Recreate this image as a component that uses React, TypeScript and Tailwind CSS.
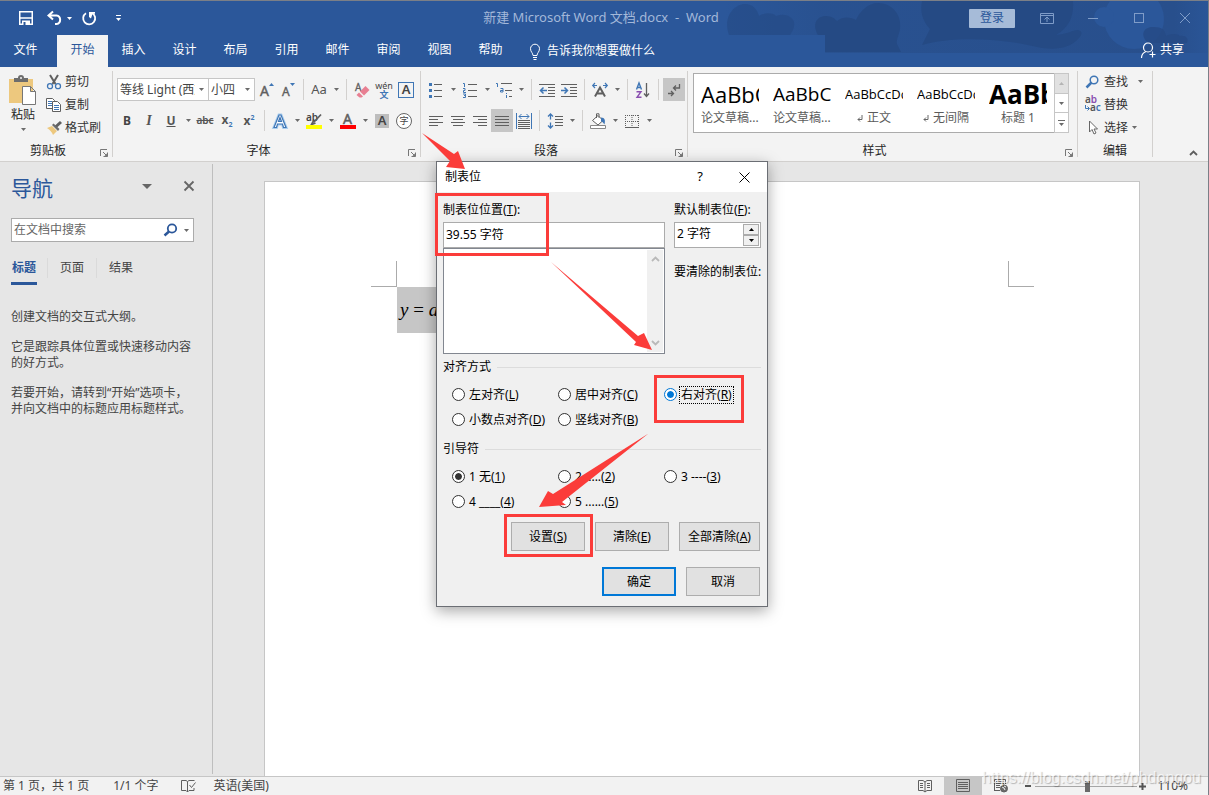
import type { ReactNode } from "react";

const TABS = ["文件", "开始", "插入", "设计", "布局", "引用", "邮件", "审阅", "视图", "帮助"];

const STYLES = [
  { sample: "AaBbC", name: "论文草稿...", size: "text-[22px]", mark: false },
  { sample: "AaBbCc", name: "论文草稿...", size: "text-[19px]", mark: false },
  { sample: "AaBbCcDd", name: "正文", size: "text-[13px]", mark: true },
  { sample: "AaBbCcDd", name: "无间隔", size: "text-[13px]", mark: true },
  { sample: "AaBbC", name: "标题 1", size: "text-[26px] font-bold", mark: false },
];

const ALIGNMENTS = [
  { label: "左对齐", hotkey: "L" },
  { label: "居中对齐", hotkey: "C" },
  { label: "右对齐", hotkey: "R" },
  { label: "小数点对齐", hotkey: "D" },
  { label: "竖线对齐", hotkey: "B" },
];

const LEADERS = [
  { label: "1 无", hotkey: "1" },
  { label: "2 .....", hotkey: "2" },
  { label: "3 ----", hotkey: "3" },
  { label: "4 ____", hotkey: "4" },
  { label: "5 ......", hotkey: "5" },
];

function Svg({ children, className = "w-4 h-4", box = "0 0 16 16" }: { children: ReactNode; className?: string; box?: string }) {
  return (
    <svg viewBox={box} className={`shrink-0 overflow-visible ${className}`} fill="none" stroke="#5f5f5f" aria-hidden="true">
      {children}
    </svg>
  );
}

function Caret({ className = "text-[#6a6a6a]" }: { className?: string }) {
  return (
    <svg viewBox="0 0 5 3" className={`w-[5px] h-[3px] shrink-0 ${className}`} aria-hidden="true">
      <path d="M0 0h5L2.5 3z" fill="currentColor" />
    </svg>
  );
}

function Tool({ label, active, children }: { label: string; active?: boolean; children: ReactNode }) {
  return (
    <button
      type="button"
      aria-label={label}
      className={`flex w-[22px] h-[23px] shrink-0 items-center justify-center ${active ? "bg-[#c6c6c6]" : ""}`}
    >
      {children}
    </button>
  );
}

function More({ label }: { label: string }) {
  return (
    <button type="button" aria-label={label} className="flex w-3 h-[23px] shrink-0 items-center justify-center">
      <Caret />
    </button>
  );
}

function Sep() {
  return <div className="w-px h-[21px] mx-1 shrink-0 bg-[#d2d0ce]" />;
}

function Group({ title, launcher = true, className = "", children }: { title: string; launcher?: boolean; className?: string; children: ReactNode }) {
  return (
    <section className={`flex flex-col h-[86px] border-r border-[#d2d0ce] ${className}`}>
      <div className="flex-1">{children}</div>
      <div className="flex h-3 items-end">
        <span className="flex-1 text-center leading-3">{title}</span>
        {launcher && (
          <button type="button" aria-label={`${title}设置`} className="w-4 flex justify-center">
            <Svg className="w-2 h-2" box="0 0 8 8">
              <path d="M.5 7V.5H7M3 3l4 4M7.5 3.5v4h-4" stroke="#777" />
              <path d="M7.5 4v3.500H4z" fill="#777" stroke="none" />
            </Svg>
          </button>
        )}
      </div>
    </section>
  );
}

function Combo({ label, value, className }: { label: string; value: string; className: string }) {
  return (
    <div className={`flex h-[23px] items-center gap-1 border border-[#c6c6c6] bg-white pl-0.5 pr-1 ${className}`}>
      <select aria-label={label} className="min-w-0 flex-1 appearance-none bg-transparent overflow-hidden text-[#444]">
        <option>{value}</option>
      </select>
      <Caret />
    </div>
  );
}

function TitleBar() {
  return (
    <div className="relative flex h-[34px] items-center text-white">
      <div className="flex w-[294px] shrink-0 items-center pl-[18px]">
        <button type="button" aria-label="保存" className="mr-[13px]">
          <Svg>
            <path d="M1.750 1.750h12.500v12.500H1.750zM1.750 8h12.500" stroke="#fff" strokeWidth="1.500" />
            <path d="M4 10.500h8V15H4z" fill="#fff" stroke="none" />
            <path d="M5.500 12h2v3h-2z" fill="#2b579a" stroke="none" />
          </Svg>
        </button>
        <button type="button" aria-label="撤消" className="mr-1">
          <Svg>
            <path d="M6 1.500L1.500 5.500 6 9.500M2 5.500h7.500a4.300 4.300 0 0 1 0 8.500H8" stroke="#fff" strokeWidth="2" />
          </Svg>
        </button>
        <Caret className="mr-[9px]" />
        <button type="button" aria-label="重复" className="mr-[19px]">
          <Svg>
            <path d="M5 3.200A6 6 0 1 0 11 3" stroke="#fff" strokeWidth="1.800" />
            <path d="M8 2h6v1.800h-2.500L10 8.500 8 7z" fill="#fff" stroke="none" />
          </Svg>
        </button>
        <button type="button" aria-label="自定义快速访问工具栏" className="flex flex-col items-center gap-0.5">
          <span className="h-px w-[5px] bg-white" />
          <Caret className="text-white" />
        </button>
      </div>
      <div className="flex-1 text-center text-[13px] text-[#a3b8d9] whitespace-pre leading-4 pb-0.5">新建 Microsoft Word 文档.docx  -  Word</div>
      <div className="flex w-[300px] shrink-0 items-center justify-end text-[#7f9cc8]">
        <button type="button" className="mr-[9px] h-[19px] w-[46px] rounded-[1px] bg-[#a6bbd8] leading-4 text-[#2b579a]">登录</button>
        <button type="button" aria-label="功能区显示选项" className="flex w-[46px] justify-center">
          <Svg className="w-[14px] h-[14px]" box="1 1 14 14">
            <path d="M1.500 3.500h13v10h-13zM1.500 5.500h13M8 12V7.500M5.500 9.500L8 7l2.500 2.500" stroke="#7f9cc8" />
          </Svg>
        </button>
        <button type="button" aria-label="最小化" className="flex w-[46px] justify-center">
          <span className="h-px w-[10px] bg-[#7f9cc8]" />
        </button>
        <button type="button" aria-label="最大化" className="flex w-[46px] justify-center">
          <span className="h-[10px] w-[10px] border border-[#7f9cc8]" />
        </button>
        <button type="button" aria-label="关闭" className="flex w-[46px] justify-center">
          <Svg className="w-[10px] h-[10px]" box="0 0 10 10">
            <path d="M0 0l10 10M10 0L0 10" stroke="#7f9cc8" />
          </Svg>
        </button>
      </div>
    </div>
  );
}

function Header() {
  return (
    <header className="relative bg-[#2b579a]">
      <svg viewBox="0 0 484 52" className="absolute right-0 top-0 w-[484px] h-[52px]" aria-hidden="true">
        <defs>
          <linearGradient id="fade" x1="0" x2="1">
            <stop offset="0" stopColor="#284f8c" stopOpacity="0" />
            <stop offset=".2" stopColor="#284f8c" stopOpacity=".7" />
            <stop offset=".93" stopColor="#284f8c" />
            <stop offset="1" stopColor="#284f8c" stopOpacity=".2" />
          </linearGradient>
        </defs>
        <path d="M0 0h484v52H101V34H0z" fill="url(#fade)" />
        <circle cx="410" cy="18" r="30" fill="#2b579a" />
        <circle cx="380" cy="16" r="10" fill="#2b579a" />
        <g fill="#254a84">
          <path d="M5 34C-2 14 12 3 21 3c8 0 12 5 14 12 6-4 15-3 17 0 8-3 16 0 18 6 1 6-2 10-4 13z" opacity=".6" />
          <path d="M94 34c-6-10-2-19 8-19 6 0 9 3 11 5 6-5 14-4 19-1 4-9 12-17 22-17 14 0 24 12 22 26-1 6-4 11-3 15l4 8h-76V34z" />
          <path d="M198 0h151c1 14-3 26-17 34 12-1 17-5 21-5 5 0 6 4 2 8-10 12-28 12-42 9-40-10-88-10-115-2l8-16c-8-9-10-18-8-28z" />
          <path d="M424 42c-10-10-2-17 6-16 8 0 11 3 12 9 6-3 12-2 14 0 6-1 9 3 7 7z" opacity=".8" />
        </g>
      </svg>
      <TitleBar />
      <nav className="relative flex h-8 items-stretch text-white">
        {TABS.map((tab, i) => (
          <button
            key={tab}
            type="button"
            className={`w-[51px] pb-0.5 ${i === 0 ? "mr-[6px]" : ""} ${tab === "开始" ? "bg-[#f3f3f3] text-[#2b579a]" : ""}`}
          >
            {tab}
          </button>
        ))}
        <button type="button" className="ml-3 flex items-center gap-[5px]">
          <Svg className="w-[14px] h-[17px]" box="0 0 14 17">
            <path d="M5 12.500C5 10 2.500 9 2.500 5.700a4.500 4.500 0 0 1 9 0C11.500 9 9 10 9 12.500zM5 14.500h4M5.500 16.500h3" stroke="#fff" />
          </Svg>
          告诉我你想要做什么
        </button>
        <button type="button" className="ml-auto mr-6 flex items-center gap-1 pb-0.5">
          <Svg>
            <circle cx="8" cy="5.500" r="4.500" stroke="#fff" strokeWidth="1.200" />
            <path d="M1.500 16c0-3.500 2-5.500 4.500-6.500M9.500 12.500h6M12.500 9.500v6" stroke="#fff" strokeWidth="1.200" />
          </Svg>
          共享
        </button>
      </nav>
    </header>
  );
}

function ClipboardGroup() {
  return (
    <Group title="剪贴板" className="w-[113px]">
      <div className="flex">
        <button type="button" className="flex w-[46px] flex-col items-center pt-[3px]">
          <Svg className="w-[30px] h-8" box="0 0 30 32">
            <path d="M1 5h24v24H1z" fill="#edc87e" stroke="none" />
            <path d="M6 4h4a3 3 0 0 1 6 0h4v4H6z" fill="#6d6d6d" stroke="none" />
            <circle cx="13" cy="4" r="1" fill="#f3f3f3" stroke="none" />
            <path d="M14.500 12.500h8l5 5v13h-13zM22.500 12.500v5h5" fill="#fff" stroke="#777" />
          </Svg>
          <span className="leading-[18px]">粘贴</span>
          <span className="pt-1 leading-none"><Caret /></span>
        </button>
        <div className="flex flex-col text-[#333]">
          <button type="button" className="flex h-[23px] items-center gap-[3px] pb-0.5">
            <Svg>
              <path d="M4 1l5.500 9M12 1l-5.500 9" strokeWidth="2" />
              <circle cx="4" cy="12.200" r="2.500" stroke="#3f76b5" strokeWidth="1.300" />
              <circle cx="12" cy="12.200" r="2.500" stroke="#3f76b5" strokeWidth="1.300" />
            </Svg>
            剪切
          </button>
          <button type="button" className="flex h-[23px] items-center gap-[3px] pb-0.5">
            <Svg>
              <path d="M.5 1.500h6l2 2v8h-8z" fill="#fff" />
              <path d="M2 4.500h4M2 6.500h4M2 8.500h4" stroke="#3f76b5" />
              <path d="M6.500 4.500h5l3 3v7h-8z" fill="#fff" />
              <path d="M8 8.500h5M8 10.500h5M8 12.500h5" stroke="#3f76b5" />
            </Svg>
            复制
          </button>
          <button type="button" className="flex h-[23px] items-center gap-[3px] pb-0.5">
            <Svg>
              <path d="M1 8l5-2 5 5-4 4c-1-3-3-5-6-7z" fill="#edc87e" stroke="none" />
              <path d="M6 5l6 6 1.500-2-6-5.500z" fill="#6d6d6d" stroke="none" />
              <path d="M10 6.500L15 2" strokeWidth="3" />
            </Svg>
            格式刷
          </button>
        </div>
      </div>
    </Group>
  );
}

function FontGroup() {
  return (
    <Group title="字体" className="w-[308px]">
      <div className="flex flex-col gap-2 pt-[7px] pl-[3px] text-[#555]">
        <div className="flex items-center">
          <Combo label="字体" value="等线 Light (西文标题)" className="ml-px w-[92px] -mr-px" />
          <Combo label="字号" value="小四" className="w-[47px]" />
          <Tool label="增大字号">
            <Svg>
              <text x="2" y="14" fontSize="14" fill="#5f5f5f" stroke="#5f5f5f" strokeWidth=".4">A</text>
              <path d="M11 4l2.500-3L16 4z" fill="#3f76b5" stroke="none" />
            </Svg>
          </Tool>
          <Tool label="减小字号">
            <Svg>
              <text x="2" y="14" fontSize="12" fill="#5f5f5f" stroke="#5f5f5f" strokeWidth=".4">A</text>
              <path d="M10 1l2.500 3L15 1z" fill="#3f76b5" stroke="none" />
            </Svg>
          </Tool>
          <Sep />
          <Tool label="更改大小写"><span className="text-[13px]">Aa</span></Tool>
          <More label="大小写选项" />
          <Sep />
          <Tool label="清除所有格式">
            <Svg>
              <text x="1" y="9" fontSize="10" fill="#5f5f5f" stroke="#5f5f5f" strokeWidth=".3">A</text>
              <path d="M6 9.500L11.500 4l4 4L10 13.500z" fill="#e87f92" stroke="none" />
              <path d="M5 10.500l4 4-1.500 1h-2L2.500 13z" fill="#e87f92" stroke="none" />
            </Svg>
          </Tool>
          <Tool label="拼音指南">
            <span className="flex flex-col items-center">
              <span className="text-[9px] leading-[9px] text-[#444]">wén</span>
              <span className="text-[9px] leading-[9px] font-bold text-[#3f76b5]">文</span>
            </span>
          </Tool>
          <Tool label="字符边框">
            <span className="flex h-4 w-4 items-center justify-center border border-[#3f76b5] text-[13px] font-semibold leading-none text-[#444]">A</span>
          </Tool>
        </div>
        <div className="flex items-center">
          <Tool label="加粗"><b className="text-[#444]">B</b></Tool>
          <Tool label="倾斜"><i className="font-['Liberation_Serif',serif] text-sm font-bold">I</i></Tool>
          <Tool label="下划线"><b className="underline">U</b></Tool>
          <More label="下划线选项" />
          <Tool label="删除线"><span className="text-[10px] font-semibold line-through">abc</span></Tool>
          <Tool label="下标"><b>x<span className="align-sub text-[7px] text-[#3f76b5]">2</span></b></Tool>
          <Tool label="上标"><b>x<span className="align-super text-[7px] text-[#3f76b5]">2</span></b></Tool>
          <Sep />
          <Tool label="文本效果">
            <Svg>
              <path d="M2 14.500L7 2h2l5 12.500h-2.500L10.500 11h-5l-1 3.500zM6.500 8.500h3L8 4.500z" fill="#fff" stroke="#a9cdee" strokeWidth="3" />
              <path d="M2 14.500L7 2h2l5 12.500h-2.500L10.500 11h-5l-1 3.500zM6.500 8.500h3L8 4.500z" fill="#fff" stroke="#3f76b5" strokeWidth="1.200" />
            </Svg>
          </Tool>
          <More label="文本效果选项" />
          <Tool label="突出显示">
            <Svg>
              <text x="0" y="8" fontSize="10" fill="#444" stroke="none" fontWeight="600">ab</text>
              <path d="M15 1.500L8 9M7.500 8l-2 3.500 4-1.500" strokeWidth="1.800" />
              <path d="M0 12h16v4H0z" fill="#ff0" stroke="none" />
            </Svg>
          </Tool>
          <More label="突出显示颜色" />
          <Tool label="字体颜色">
            <Svg>
              <text x="3" y="11" fontSize="14" fill="#5f5f5f" stroke="#5f5f5f" strokeWidth=".5">A</text>
              <path d="M0 12h16v4H0z" fill="#f00" stroke="none" />
            </Svg>
          </Tool>
          <More label="字体颜色选项" />
          <Tool label="字符底纹">
            <span className="flex h-[14px] w-[14px] items-center justify-center bg-[#bdbdbd] text-[13px] font-semibold leading-none text-[#444]">A</span>
          </Tool>
          <Tool label="带圈字符">
            <span className="flex h-4 w-4 items-center justify-center rounded-full border border-[#666] bg-white text-[9px] leading-none text-[#444]">字</span>
          </Tool>
        </div>
      </div>
    </Group>
  );
}

function ParagraphGroup() {
  return (
    <Group title="段落" className="w-[267px]">
      <div className="flex flex-col gap-2 pt-[7px] pl-1">
        <div className="flex items-center">
          <Tool label="项目符号">
            <Svg>
              <path d="M6 2.500h8M6 8.500h8M6 14.500h8" />
              <path d="M1 1h3v3H1zM1 7h3v3H1zM1 13h3v3H1z" fill="#3f76b5" stroke="none" />
            </Svg>
          </Tool>
          <More label="项目符号库" />
          <Tool label="编号">
            <Svg>
              <path d="M6 2.500h9M6 8.500h9M6 14.500h9" />
              <path d="M1 1.500h1.500V5M1 6.500h2v2H1.500v2H4M1 12h2.500v1.500H2h1.500V15.500H1" stroke="#3f76b5" />
            </Svg>
          </Tool>
          <More label="编号库" />
          <Tool label="多级列表">
            <Svg>
              <path d="M5 1.500h11M9 8.500h7M13 14.500h3" />
              <path d="M0 1.500h1.500V5M4.500 6.500H7V10H4.500V8.500H7M10.500 11v1M10.500 13v3" stroke="#3f76b5" />
            </Svg>
          </Tool>
          <More label="列表库" />
          <Sep />
          <Tool label="减少缩进量">
            <Svg>
              <path d="M0 2.500h16M9 5.500h7M9 8.500h7M9 11.500h7M0 14.500h16" />
              <path d="M8 8.500H2M4.500 5.500l-3 3 3 3" stroke="#3f76b5" strokeWidth="1.500" />
            </Svg>
          </Tool>
          <Tool label="增加缩进量">
            <Svg>
              <path d="M0 2.500h16M9 5.500h7M9 8.500h7M9 11.500h7M0 14.500h16" />
              <path d="M0 8.500h6M3.500 5.500l3 3-3 3" stroke="#3f76b5" strokeWidth="1.500" />
            </Svg>
          </Tool>
          <Sep />
          <Tool label="中文版式">
            <Svg>
              <path d="M3 14.500L8 5.500l5 9M5 11.500h6" strokeWidth="2" />
              <path d="M5 3.500H1M3 1L.7 3.500 3 6M11 3.500h4M13 1l2.300 2.500L13 6" stroke="#3f76b5" strokeWidth="1.200" />
            </Svg>
          </Tool>
          <More label="中文版式选项" />
          <Sep />
          <Tool label="排序">
            <Svg>
              <path d="M1.500 7.500L4 1l2.500 6.500M2.500 5.500h3" stroke="#3f76b5" strokeWidth="1.400" />
              <path d="M1.500 9.700h4.500L2 15.300h4.500" stroke="#8a4fb0" strokeWidth="1.400" />
              <path d="M11.500 1v13M9 11.500l2.500 3 2.500-3" strokeWidth="1.300" />
            </Svg>
          </Tool>
          <Sep />
          <Tool label="显示/隐藏编辑标记" active>
            <Svg>
              <path d="M13.500 2v4H8M10 3.500L7.500 6 10 8.500M2 11.500h5M5 9l2.500 2.500L5 14" strokeWidth="1.300" />
            </Svg>
          </Tool>
        </div>
        <div className="flex items-center">
          <Tool label="左对齐"><Svg><path d="M1 3.500h14M1 6.500h9M1 9.500h14M1 12.500h9" /></Svg></Tool>
          <Tool label="居中"><Svg><path d="M1 3.500h14M3 6.500h10M1 9.500h14M3 12.500h10" /></Svg></Tool>
          <Tool label="右对齐"><Svg><path d="M1 3.500h14M6 6.500h9M1 9.500h14M6 12.500h9" /></Svg></Tool>
          <Tool label="两端对齐" active><Svg><path d="M1 3.500h14M1 6.500h14M1 9.500h14M1 12.500h14" /></Svg></Tool>
          <Tool label="分散对齐">
            <Svg>
              <path d="M2 7.500h12M2 9.500h12M2 11.500h12M2 13.500h12M2 15.500h12" />
              <path d="M.5 0v16M15.500 0v16M3 3.500h10M5.500 1L3 3.500 5.500 6M10.500 1L13 3.500 10.500 6" stroke="#3f76b5" />
            </Svg>
          </Tool>
          <Sep />
          <Tool label="行和段落间距">
            <Svg>
              <path d="M8 3.500h8M8 6.500h8M8 9.500h8M8 12.500h8" />
              <path d="M3.500 1v5.500M3.500 9.500V15M1 3.500L3.500 1 6 3.500M1 12.500L3.500 15 6 12.500" stroke="#3f76b5" strokeWidth="1.300" />
            </Svg>
          </Tool>
          <More label="间距选项" />
          <Sep />
          <Tool label="底纹">
            <Svg>
              <path d="M2.500 7.500l5.500-5 5 5-5 4.500zM6.500 5V.8h2.500v4" fill="#fff" />
              <path d="M11 4.500c4 0 4.500 3 3.500 7-1-1.500-2-3-3.500-3z" fill="#3f76b5" stroke="none" />
              <path d="M.5 12.500h15v3H.5z" fill="#fff" stroke="#888" />
            </Svg>
          </Tool>
          <More label="底纹颜色" />
          <Tool label="边框">
            <Svg>
              <path d="M1.500 2v13M14.500 2v13M8 2v13M1 2.500h14M1 8.500h14" strokeDasharray="1 1" />
              <path d="M1 14.500h14" />
            </Svg>
          </Tool>
          <More label="边框选项" />
        </div>
      </div>
    </Group>
  );
}

function StylesGroup() {
  return (
    <Group title="样式" className="w-[390px]">
      <div className="flex pt-0.5 pl-[5px]">
        <div className="flex h-[60px] border border-[#ababab] bg-white">
          {STYLES.map((s, i) => (
            <button key={i} type="button" className="flex w-[72px] flex-col px-[7px] pt-1 text-left">
              <span className={`flex h-8 w-full items-center overflow-hidden font-['Open_Sans',sans-serif] leading-8 text-black ${s.size}`}>{s.sample}</span>
              <span className={`flex w-full items-center gap-1 text-[#5b5b5b] leading-4 whitespace-nowrap ${s.name.endsWith("...") ? "" : "justify-center"}`}>
                {s.mark && (
                  <Svg className="w-[6px] h-[7px]" box="0 0 6 7">
                    <path d="M5 0v4.500H1M3 2.500l-2 2 2 2" stroke="#666" />
                  </Svg>
                )}
                {s.name}
              </span>
            </button>
          ))}
          <div className="-my-px -mr-px flex w-[15px] flex-col border border-[#c6c6c6]">
            <button type="button" aria-label="上一行" className="flex flex-1 items-center justify-center bg-[#e1e1e1]">
              <Caret className="rotate-180 text-[#b4b4b4]" />
            </button>
            <button type="button" aria-label="下一行" className="flex flex-1 items-center justify-center border-y border-[#c6c6c6]">
              <Caret />
            </button>
            <button type="button" aria-label="其他样式" className="flex flex-1 flex-col items-center justify-center gap-0.5">
              <span className="h-px w-[7px] bg-[#6a6a6a]" />
              <Caret />
            </button>
          </div>
        </div>
      </div>
    </Group>
  );
}

function EditGroup() {
  return (
    <Group title="编辑" launcher={false} className="w-[75px]">
      <div className="flex flex-col pl-[7px] text-[#333]">
        <button type="button" className="flex h-[23px] items-center gap-1 pb-0.5">
          <Svg className="w-[15px] h-[14px]" box="0 0 15 14">
            <circle cx="9" cy="5" r="3.800" stroke="#3f76b5" strokeWidth="1.500" />
            <path d="M6.500 7.500L1.500 12.500" stroke="#3f76b5" strokeWidth="2.500" />
          </Svg>
          查找
          <span className="pl-[6px]"><Caret /></span>
        </button>
        <button type="button" className="flex h-[23px] items-center gap-1 pb-0.5">
          <Svg className="w-[15px] h-[15px]" box="0 0 15 15">
            <g stroke="none" fontSize="10" fontWeight="600">
              <text x="0" y="6" fill="#555">a<tspan fill="#8a4fb0">b</tspan></text>
              <text x="5" y="14" fill="#555">a<tspan fill="#3f76b5">c</tspan></text>
            </g>
            <path d="M.5 8v3.500H4M2.500 9.500l2 2-2 2" stroke="#3f76b5" />
          </Svg>
          替换
        </button>
        <button type="button" className="flex h-[23px] items-center gap-1 pb-0.5">
          <Svg className="w-[15px] h-[15px]" box="0 0 15 15">
            <path d="M4.500 1v11l2.500-2.500 2 4.500 2-1-2-4h3.500z" fill="#fff" stroke="#666" />
          </Svg>
          选择
          <Caret />
        </button>
      </div>
    </Group>
  );
}

function NavPane() {
  return (
    <aside className="flex w-[213px] shrink-0 pt-[2px] pb-[2px]">
      <div className="min-w-0 flex-1 border-r border-[#bebebe] pl-[11px] pr-[18px] text-[#444]">
        <div className="flex h-12 items-center">
          <h2 className="flex-1 text-[21px] text-[#2b579a]">导航</h2>
          <button type="button" aria-label="窗格选项" className="mr-[32px] pb-1">
            <svg viewBox="0 0 10 5" className="w-[10px] h-[5px]" aria-hidden="true"><path d="M0 0h10L5 5z" fill="#666" /></svg>
          </button>
          <button type="button" aria-label="关闭窗格" className="pb-1">
            <Svg className="w-[10px] h-[10px]" box="0 0 10 10"><path d="M.5.5l9 9M9.500.5l-9 9" stroke="#666" strokeWidth="1.800" /></Svg>
          </button>
        </div>
        <div className="mt-[6px] flex h-6 items-center border border-[#ababab] bg-white pl-0.5 pr-1">
          <input aria-label="在文档中搜索" placeholder="在文档中搜索" className="w-full min-w-0 flex-1 bg-transparent outline-none placeholder:text-[#666]" />
          <Svg className="mr-[6px] w-[15px] h-[14px]" box="0 0 15 14">
            <circle cx="9" cy="5.500" r="4.200" stroke="#2b579a" strokeWidth="1.800" />
            <path d="M6 8.500L1.500 12.500" stroke="#2b579a" strokeWidth="2.500" />
          </Svg>
          <Caret />
        </div>
        <div className="mt-4 flex items-start">
          <button type="button" className="mr-[10px] h-[27px] w-[26px] border-b-[3px] border-[#2b579a] pb-1 font-bold leading-5 text-[#2b579a]">标题</button>
          <span className="h-5 w-px bg-[#dadada]" />
          <button type="button" className="mx-3 leading-5">页面</button>
          <span className="h-5 w-px bg-[#dadada]" />
          <button type="button" className="mx-3 leading-5">结果</button>
        </div>
        <div className="mt-6 flex flex-col gap-[14px] leading-4 whitespace-nowrap">
          <p>创建文档的交互式大纲。</p>
          <p>它是跟踪具体位置或快速移动内容<br />的好方式。</p>
          <p>若要开始，请转到“开始”选项卡，<br />并向文档中的标题应用标题样式。</p>
        </div>
      </div>
    </aside>
  );
}

function Radios({ title, name, items, checked }: { title: string; name: string; items: { label: string; hotkey: string }[]; checked: number }) {
  return (
    <fieldset>
      <legend className="flex w-full items-center gap-[6px] leading-4">
        {title}
        <span className="h-px flex-1 bg-[#dcdcdc]" />
      </legend>
      <div className="grid grid-cols-[106px_106px_1fr] pl-[9px] pt-[7px]">
        {items.map((item, i) => {
          const focused = item.hotkey === "R";
          return (
            <label key={item.hotkey} className="flex h-[25px] items-center gap-[3px] whitespace-nowrap">
              <input
                type="radio"
                name={name}
                defaultChecked={i === checked}
                className={`h-[13px] w-[13px] shrink-0 appearance-none rounded-full border bg-white p-0.5 bg-clip-content ${
                  focused ? "border-[#0078d7] checked:bg-[#0078d7] shadow-[inset_0_0_0_2px_#fff]" : "border-[#333] checked:bg-[#333] shadow-[inset_0_0_0_2px_#fff]"
                }`}
              />
              <span className={focused ? "-ml-px border border-dotted border-black px-px" : "pl-px"}>
                {item.label}(<u>{item.hotkey}</u>)
              </span>
            </label>
          );
        })}
      </div>
    </fieldset>
  );
}

function TabStopDialog() {
  return (
    <div
      role="dialog"
      aria-label="制表位"
      className="absolute left-[436px] top-[160px] w-[332px] border border-[#6b6e74] bg-[#f0f0f0] text-black shadow-[0_4px_14px_rgba(0,0,0,0.35)]"
    >
      <div className="flex h-[30px] items-center bg-white pl-2 pr-[17px]">
        <span className="flex-1">制表位</span>
        <button type="button" aria-label="帮助" className="mr-9 text-[13px]">?</button>
        <button type="button" aria-label="关闭">
          <Svg className="w-[11px] h-[11px]" box="0 0 11 11"><path d="M.5.5l10 10M10.500.5l-10 10" stroke="#000" /></Svg>
        </button>
      </div>
      <div className="px-[6px] pb-[10px] pt-[10px]">
        <div className="flex justify-between">
          <div className="w-[222px]">
            <label htmlFor="stop" className="block leading-4">制表位位置(<u>T</u>):</label>
            <input id="stop" defaultValue="39.55 字符" className="mt-1 block h-[26px] w-full border border-[#ababab] bg-white pl-0.5 pb-[3px] outline-none" />
            <div className="flex h-[106px] justify-end border border-[#828790] bg-white p-px">
              <div className="flex w-4 flex-col items-center justify-between bg-[#f0f0f0] py-[6px]">
                <Svg className="w-[9px] h-[6px]" box="0 0 9 6"><path d="M1 5l3.500-3.500L8 5" stroke="#b9b9b9" strokeWidth="1.800" /></Svg>
                <Svg className="w-[9px] h-[6px]" box="0 0 9 6"><path d="M1 1l3.500 3.500L8 1" stroke="#b9b9b9" strokeWidth="1.800" /></Svg>
              </div>
            </div>
          </div>
          <div className="w-[87px]">
            <label htmlFor="default-stop" className="block leading-4">默认制表位(<u>F</u>):</label>
            <div className="mt-1 flex h-[26px] border border-[#ababab] bg-white p-px">
              <input id="default-stop" defaultValue="2 字符" className="min-w-0 flex-1 pl-px pb-0.5 outline-none" />
              <div className="flex w-4 flex-col">
                <button type="button" aria-label="增加" className="flex flex-1 items-center justify-center border border-[#ababab] bg-[#f0f0f0]">
                  <Caret className="rotate-180 text-black" />
                </button>
                <button type="button" aria-label="减少" className="flex flex-1 items-center justify-center border border-[#ababab] bg-[#f0f0f0]">
                  <Caret className="text-black" />
                </button>
              </div>
            </div>
            <p className="mt-4 whitespace-nowrap leading-4">要清除的制表位:</p>
          </div>
        </div>
        <div className="mt-[5px] flex flex-col gap-[9px]">
          <Radios title="对齐方式" name="align" items={ALIGNMENTS} checked={2} />
          <Radios title="引导符" name="leader" items={LEADERS} checked={0} />
        </div>
        <div className="mt-2 flex justify-end gap-[10px] pr-px">
          <button type="button" className="h-[29px] w-[74px] border border-[#adadad] bg-[#e1e1e1]">设置(<u>S</u>)</button>
          <button type="button" className="h-[29px] w-[74px] border border-[#adadad] bg-[#e1e1e1]">清除(<u>E</u>)</button>
          <button type="button" className="h-[29px] w-[81px] border border-[#adadad] bg-[#e1e1e1]">全部清除(<u>A</u>)</button>
        </div>
        <div className="mt-4 flex justify-end gap-[10px] pr-px">
          <button type="button" className="h-[29px] w-[74px] border-2 border-[#0078d7] bg-[#e1e1e1]">确定</button>
          <button type="button" className="h-[29px] w-[74px] border border-[#adadad] bg-[#e1e1e1]">取消</button>
        </div>
      </div>
    </div>
  );
}

// Red step boxes and arrows that lie over the whole window
function Annotations() {
  return (
    <svg className="pointer-events-none absolute left-0 -top-px h-[620px] w-[800px]" viewBox="0 0 800 620" aria-hidden="true">
      <g fill="none" stroke="#fb3c3a" strokeWidth="3">
        <path d="M436.500 194.500h111v60h-111zM655.500 376.500h87v45h-87zM505.500 515.500h86v40h-86z" />
      </g>
      <g fill="#fb3c3a">
        <path d="M422 133l32 21 4-3 7 18-19-2 4-6z" />
        <path d="M551 262l87 74 6-3 8 17-18-5 2-3z" />
        <path d="M648.500 433.500L553 494l-5-3-9 16 27-2-4-3z" />
      </g>
    </svg>
  );
}

function StatusBar() {
  return (
    <footer className="flex h-[19px] shrink-0 items-center border-t border-[#c6c6c6] bg-[#f2f2f2] text-[#444]">
      <span className="ml-[3px] whitespace-nowrap">第 1 页，共 1 页</span>
      <span className="ml-6 whitespace-nowrap">1/1 个字</span>
      <Svg className="ml-[22px] w-[15px] h-[14px]" box="0 0 15 14">
        <path d="M6.500 2.500l-1.500-1H.5v10H5l1.500 1.500 1.500-1.500h5V9M6.500 2.500V13M6.500 2.500L8 1.500h5.500M8.500 6l2 2.500 4-5" />
      </Svg>
      <span className="ml-[18px] whitespace-nowrap">英语(美国)</span>
      <div className="ml-auto flex h-full items-center">
        <button type="button" aria-label="阅读视图" className="flex h-full w-[38px] items-center justify-center">
          <Svg className="w-[14px] h-[14px]" box="0 0 14 14">
            <path d="M.5 1.500h4.500l2 1.500 2-1.500h4.500v10H9L7 13l-2-1.500H.5zM7 3v10M2 4.500h3M2 6.500h3M2 8.500h3M9 4.500h3M9 6.500h3M9 8.500h3" />
          </Svg>
        </button>
        <button type="button" aria-label="页面视图" className="flex h-full w-[38px] items-center justify-center bg-[#c6c6c6]">
          <Svg className="w-[14px] h-[14px]" box="0 0 14 14">
            <path d="M.5.5h13v12H.5zM2 3.500h10M2 5.500h10M2 7.500h10M2 9.500h10" />
          </Svg>
        </button>
        <button type="button" aria-label="Web 版式视图" className="flex h-full w-[38px] items-center justify-center">
          <Svg className="w-[14px] h-[14px]" box="0 0 14 14">
            <path d="M.5 11.500V.5h11V5M2 2.500h8M2 4.500h8M2 6.500h4M2 8.500h4M0 11.500h6" />
            <circle cx="10" cy="9.500" r="3.500" fill="#6a6a6a" />
            <path d="M8 8l2 1 1 2M10 7l2 1" stroke="#f2f2f2" />
          </Svg>
        </button>
        <button type="button" aria-label="缩小" className="ml-0.5 flex h-full w-3 items-center justify-center">
          <span className="h-0.5 w-[6px] bg-[#555]" />
        </button>
        <input
          type="range"
          aria-label="缩放"
          min="0"
          max="200"
          defaultValue="102"
          className="mx-px h-3 w-[102px] appearance-none bg-transparent [&::-webkit-slider-runnable-track]:h-px [&::-webkit-slider-runnable-track]:bg-[#a6a6a6] [&::-webkit-slider-thumb]:-mt-[5px] [&::-webkit-slider-thumb]:h-[11px] [&::-webkit-slider-thumb]:w-[5px] [&::-webkit-slider-thumb]:appearance-none [&::-webkit-slider-thumb]:bg-[#6a6a6a]"
        />
        <button type="button" aria-label="放大" className="flex h-full w-2 items-center justify-center">
          <Svg className="w-[7px] h-[7px]" box="0 0 7 7"><path d="M0 3.500h7M3.500 0v7" stroke="#555" strokeWidth="2" /></Svg>
        </button>
        <span className="ml-[11px] mr-5">110%</span>
      </div>
    </footer>
  );
}

export default function App() {
  return (
    <div className="relative flex h-screen flex-col overflow-hidden border-t border-r border-[#7b7f87] bg-[#e6e6e6] font-['Noto_Sans','Noto_Sans_CJK_SC',sans-serif] text-xs text-[#262626]">
      <Header />
      <div className="flex h-[95px] shrink-0 border-b border-[#d2d0ce] bg-[#f3f3f3] pt-1">
        <ClipboardGroup />
        <FontGroup />
        <ParagraphGroup />
        <StylesGroup />
        <EditGroup />
        <button type="button" aria-label="折叠功能区" className="ml-auto self-end pr-[10px] pb-[5px]">
          <Svg className="w-[9px] h-[6px]" box="0 0 9 6"><path d="M1 5l3.500-3.500L8 5" strokeWidth="1.800" /></Svg>
        </button>
      </div>
      <div className="flex min-h-0 flex-1">
        <NavPane />
        <main className="flex min-w-0 flex-1 justify-center pr-[17px] pt-[19px]">
          <div className="w-[876px] max-w-full border border-b-0 border-[#c6c6c6] bg-white pl-[106px] pr-[105px] pt-[79px]">
            <div className="flex justify-between">
              <span className="h-[26px] w-[26px] border-b border-r border-[#ababab]" />
              <span className="h-[26px] w-[26px] border-b border-l border-[#ababab]" />
            </div>
            <div className="ml-[26px] flex h-[46px] w-[160px] items-center bg-[#c6c6c6] pl-[3px] font-['Liberation_Serif',serif] text-[19px] text-black">
              <span><i>y</i> = <i>a</i></span>
            </div>
          </div>
        </main>
      </div>
      <StatusBar />
      <TabStopDialog />
      <Annotations />
      <div className="pointer-events-none absolute bottom-[9px] right-[7px] font-['Liberation_Sans',sans-serif] text-base leading-4 text-white/70 [text-shadow:1px_1px_1px_rgba(0,0,0,0.25)]">
        https://blog.csdn.net/phdongou
      </div>
    </div>
  );
}
